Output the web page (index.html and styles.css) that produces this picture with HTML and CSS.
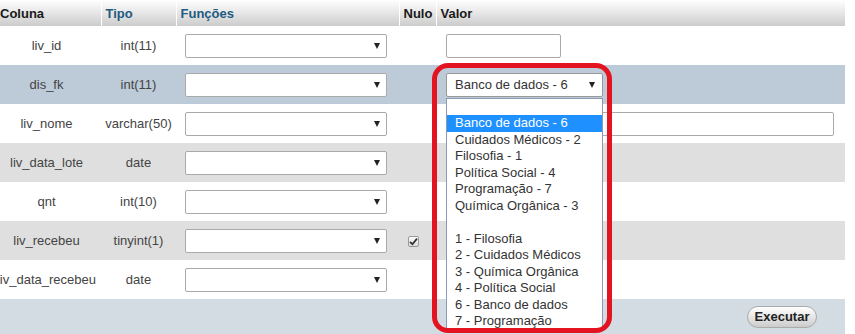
FILE: index.html
```html
<!DOCTYPE html>
<html lang="pt">
<head>
<meta charset="utf-8">
<link rel="stylesheet" href="styles.css">
</head>
<body>
<table class="grid">
  <colgroup>
    <col class="c-col"><col class="c-type"><col class="c-func"><col class="c-null"><col class="c-val">
  </colgroup>
  <thead>
    <tr>
      <th class="h-dark">Coluna</th>
      <th class="h-link">Tipo</th>
      <th class="h-link">Funções</th>
      <th class="h-dark">Nulo</th>
      <th class="h-dark">Valor</th>
    </tr>
  </thead>
  <tbody>
    <tr class="odd">
      <td class="name">liv_id</td><td class="type">int(11)</td>
      <td class="func"><div class="sel"><span class="sel-text"></span><span class="arrow"></span></div></td>
      <td class="null"></td>
      <td class="val"><div class="inp small"></div></td>
    </tr>
    <tr class="hover">
      <td class="name">dis_fk</td><td class="type">int(11)</td>
      <td class="func"><div class="sel"><span class="sel-text"></span><span class="arrow"></span></div></td>
      <td class="null"></td>
      <td class="val">
        <div class="fk-wrap">
          <div class="sel fk"><span class="sel-text">Banco de dados - 6</span><span class="arrow"></span></div>
          <ul class="list">
            <li>&nbsp;</li>
            <li class="active">Banco de dados - 6</li>
            <li>Cuidados Médicos - 2</li>
            <li>Filosofia - 1</li>
            <li>Política Social - 4</li>
            <li>Programação - 7</li>
            <li>Química Orgânica - 3</li>
            <li>&nbsp;</li>
            <li>1 - Filosofia</li>
            <li>2 - Cuidados Médicos</li>
            <li>3 - Química Orgânica</li>
            <li>4 - Política Social</li>
            <li>6 - Banco de dados</li>
            <li>7 - Programação</li>
          </ul>
          <div class="ring"></div>
        </div>
      </td>
    </tr>
    <tr class="odd">
      <td class="name">liv_nome</td><td class="type">varchar(50)</td>
      <td class="func"><div class="sel"><span class="sel-text"></span><span class="arrow"></span></div></td>
      <td class="null"></td>
      <td class="val"><div class="inp wide"></div></td>
    </tr>
    <tr class="even">
      <td class="name">liv_data_lote</td><td class="type">date</td>
      <td class="func"><div class="sel"><span class="sel-text"></span><span class="arrow"></span></div></td>
      <td class="null"></td>
      <td class="val"></td>
    </tr>
    <tr class="odd">
      <td class="name">qnt</td><td class="type">int(10)</td>
      <td class="func"><div class="sel"><span class="sel-text"></span><span class="arrow"></span></div></td>
      <td class="null"></td>
      <td class="val"></td>
    </tr>
    <tr class="even">
      <td class="name">liv_recebeu</td><td class="type">tinyint(1)</td>
      <td class="func"><div class="sel"><span class="sel-text"></span><span class="arrow"></span></div></td>
      <td class="null">
        <span class="chk"><svg width="9" height="9" viewBox="0 0 9 9"><path d="M1 4.8 L3.4 7.2 L8 1.6" fill="none" stroke="#333" stroke-width="1.8"/></svg></span>
      </td>
      <td class="val"></td>
    </tr>
    <tr class="odd">
      <td class="name">liv_data_recebeu</td><td class="type">date</td>
      <td class="func"><div class="sel"><span class="sel-text"></span><span class="arrow"></span></div></td>
      <td class="null"></td>
      <td class="val"></td>
    </tr>
  </tbody>
  <tfoot>
    <tr>
      <td colspan="5" class="foot"><button class="btn">Executar</button></td>
    </tr>
  </tfoot>
</table>
</body>
</html>
```
FILE: styles.css
```css
html, body {
  margin: 0;
  padding: 0;
  background: #fff;
  overflow: hidden;
}
body {
  width: 855px;
  height: 334px;
  font-family: "Liberation Sans", Arial, sans-serif;
  font-size: 13px;
  color: #444;
}
.grid {
  border-collapse: collapse;
  table-layout: fixed;
  width: 853px;
  margin-left: -8px;
}
.c-col { width: 109px; }
.c-type { width: 75px; }
.c-func { width: 223px; }
.c-null { width: 37px; }
.c-val { width: 409px; }

th {
  height: 26px;
  padding: 0 0 0 4px;
  text-align: left;
  font-weight: bold;
  font-size: 13px;
  background: linear-gradient(#ffffff, #cccccc);
  border-right: 1px solid #fff;
  box-sizing: border-box;
}
th:first-child { padding-left: 8px; }
.h-dark { color: #1a1a1a; }
.h-link { color: #235a81; }

td {
  height: 39px;
  padding: 0;
  vertical-align: middle;
  box-sizing: border-box;
}
tr.odd td { background: #fff; }
tr.even td { background: #dfdfdf; }
tr.hover td { background: #bdcad8; }

.name, .type { text-align: center; }
.func { padding-left: 9px; }
.val { padding-left: 10px; }
.null { padding-left: 9px; }

.sel {
  display: flex;
  align-items: center;
  box-sizing: border-box;
  width: 202px;
  height: 24px;
  border: 1px solid #aaa;
  border-radius: 2px;
  background: #fff;
  padding: 0 6px 0 8px;
  color: #333;
}
.sel-text { flex: 1; white-space: nowrap; }
.arrow {
  width: 0;
  height: 0;
  border-left: 3px solid transparent;
  border-right: 3px solid transparent;
  border-top: 6px solid #222;
}
.sel.fk {
  width: 157px;
  padding-right: 7px;
  border-color: #999;
}

.inp {
  box-sizing: border-box;
  height: 24px;
  border: 1px solid #aaa;
  border-radius: 2px;
  background: #fff;
}
.inp.small { width: 115px; }
.inp.wide { width: 388px; }

.fk-wrap {
  position: relative;
  width: 157px;
}
.list {
  position: absolute;
  left: 0;
  top: 25px;
  width: 157px;
  height: 231px;
  box-sizing: border-box;
  margin: 0;
  padding: 0;
  list-style: none;
  background: #fff;
  border: 1px solid #8a9bb0;
  overflow: hidden;
  z-index: 5;
  color: #333;
}
.list li {
  height: 16.5px;
  line-height: 16.5px;
  padding-left: 8px;
  white-space: nowrap;
}
.list li.active {
  background: #1e90ff;
  color: #fff;
}
.ring {
  position: absolute;
  left: -14px;
  top: -10px;
  width: 180px;
  height: 270px;
  box-sizing: border-box;
  border: 5px solid #e3141f;
  border-radius: 16px;
  z-index: 6;
  pointer-events: none;
}

.chk {
  display: inline-flex;
  align-items: center;
  justify-content: center;
  box-sizing: border-box;
  width: 11px;
  height: 11px;
  border: 1px solid #999;
  border-radius: 2px;
  background: linear-gradient(#fdfdfd, #dcdcdc);
  vertical-align: middle;
}

.foot {
  height: 35px;
  background: #d3dce3;
  text-align: right;
  padding-right: 28px;
}
.btn {
  height: 22px;
  width: 70px;
  padding: 0;
  border: 1px solid #aaa;
  border-radius: 11px;
  background: linear-gradient(#ffffff, #cccccc);
  font-family: "Liberation Sans", Arial, sans-serif;
  font-size: 13px;
  font-weight: bold;
  color: #222;
  vertical-align: middle;
}
```
